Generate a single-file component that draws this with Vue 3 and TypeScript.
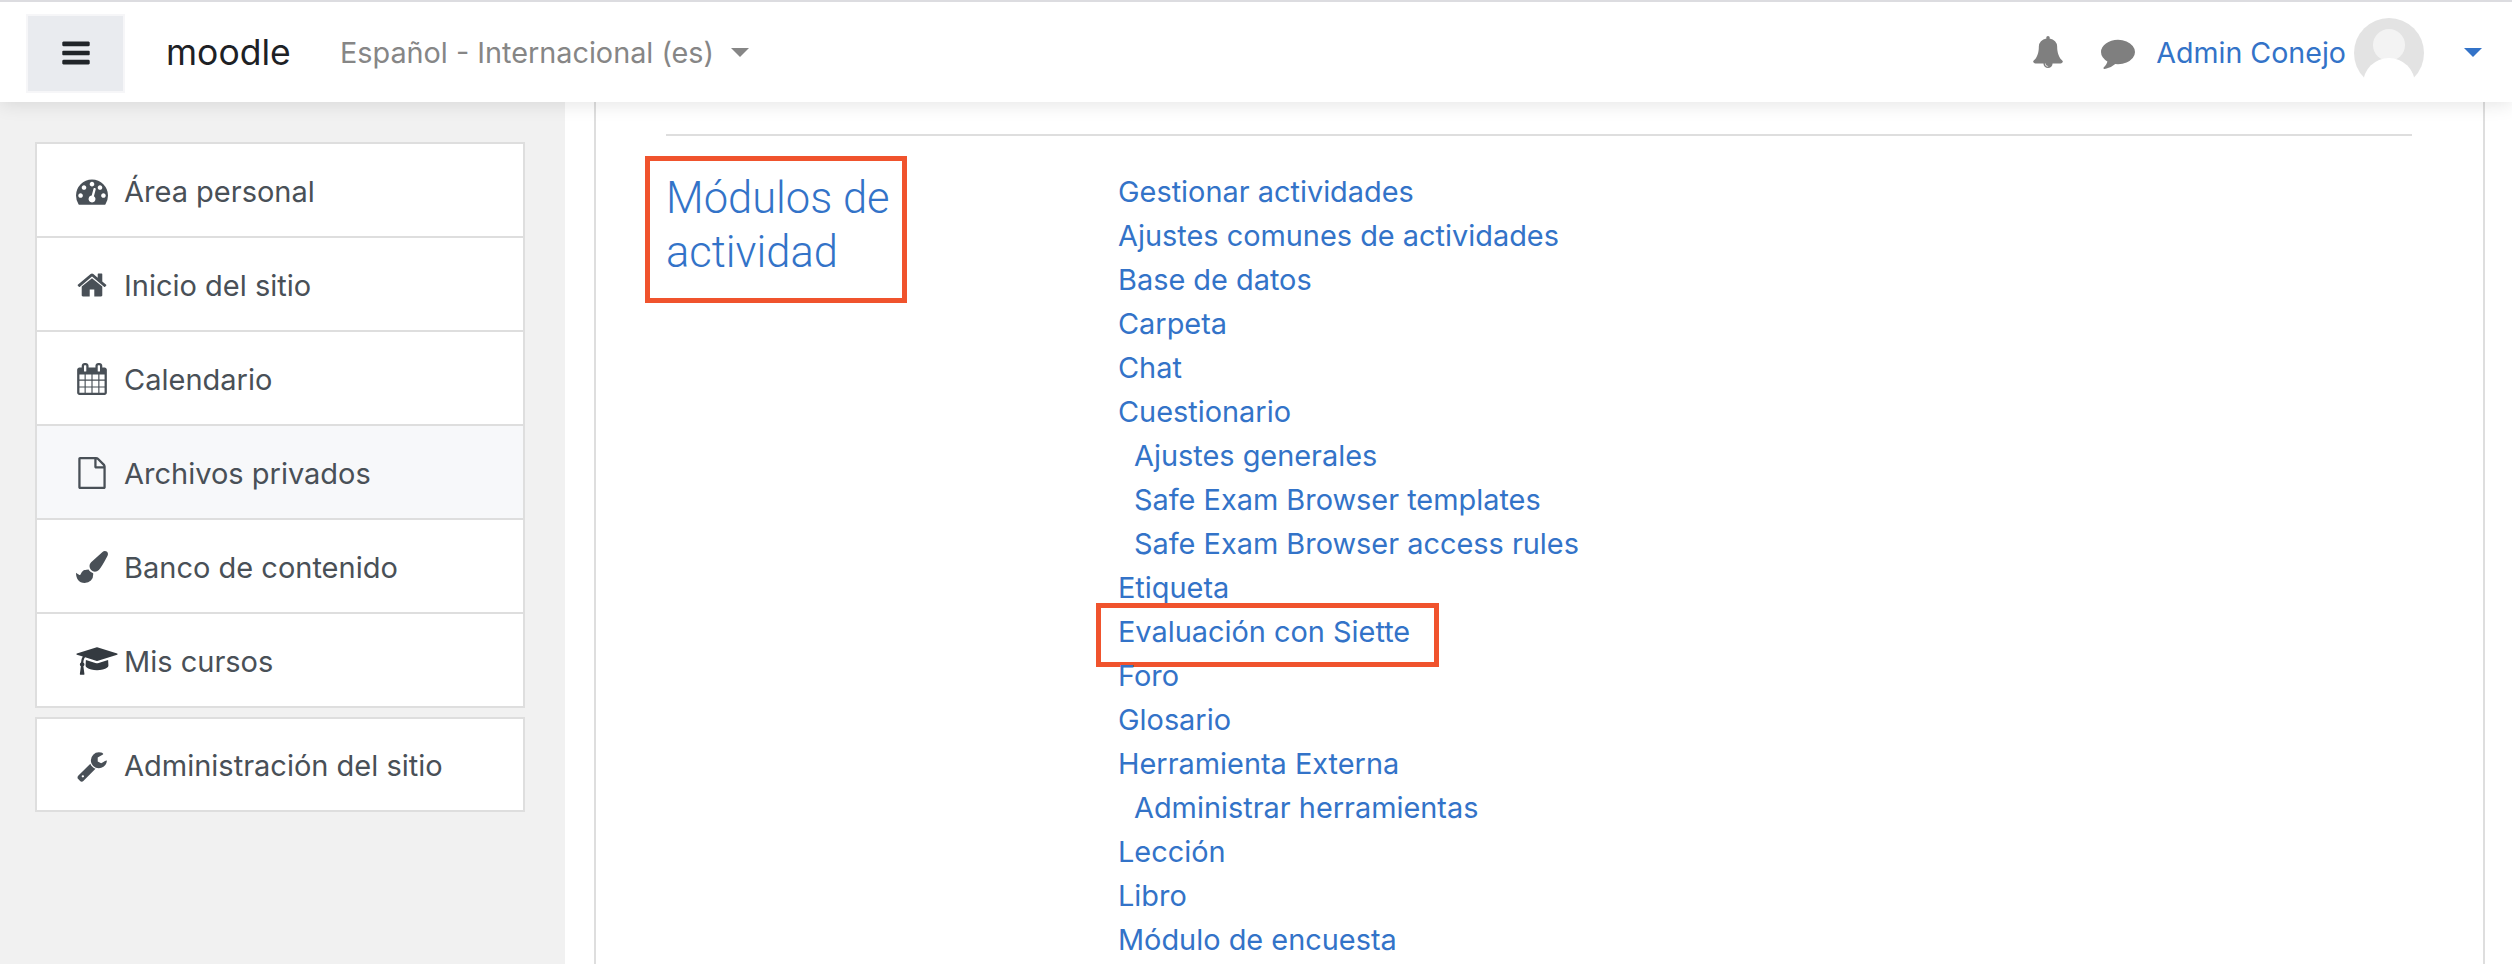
<script setup lang="ts">
interface NavItem { label: string; icon: string; vb: string; active?: boolean }
const P = {
  dash: 'M384 1152q0-53-37.5-90.5t-90.5-37.5-90.5 37.5-37.5 90.5 37.5 90.5 90.5 37.5 90.5-37.5 37.5-90.5zm192-448q0-53-37.5-90.5t-90.5-37.5-90.5 37.5-37.5 90.5 37.5 90.5 90.5 37.5 90.5-37.5 37.5-90.5zm428 481l101-382q6-26-7.5-48.5t-38.5-29.5-48 6.5-30 39.5l-101 382q-60 5-107 43.5t-63 98.5q-20 77 20 146t117 89 146-20 89-117q16-60-6-117t-72-91zm660-33q0-53-37.5-90.5t-90.5-37.5-90.5 37.5-37.5 90.5 37.5 90.5 90.5 37.5 90.5-37.5 37.5-90.5zm-640-640q0-53-37.5-90.5t-90.5-37.5-90.5 37.5-37.5 90.5 37.5 90.5 90.5 37.5 90.5-37.5 37.5-90.5zm448 192q0-53-37.5-90.5t-90.5-37.5-90.5 37.5-37.5 90.5 37.5 90.5 90.5 37.5 90.5-37.5 37.5-90.5zm320 448q0 261-141 483-19 29-54 29h-1402q-35 0-54-29-141-221-141-483 0-182 71-348t191-286 286-191 348-71 348 71 286 191 191 286 71 348z',
  home: 'M1472 992v480q0 26-19 45t-45 19h-384v-384h-256v384h-384q-26 0-45-19t-19-45v-480q0-1 .5-3t.5-3l575-474 575 474q1 2 1 6zm223-69l-62 74q-8 9-21 11h-3q-13 0-21-7l-692-577-692 577q-12 8-24 7-13-2-21-11l-62-74q-8-10-7-23.5t11-21.5l719-599q32-26 76-26t76 26l244 204v-195q0-14 9-23t23-9h192q14 0 23 9t9 23v408l219 182q10 8 11 21.5t-7 23.5z',
  cal: 'M192 1664h288v-288h-288v288zm352 0h320v-288h-320v288zm-352-352h288v-320h-288v320zm352 0h320v-320h-320v320zm-352-384h288v-288h-288v288zm736 736h320v-288h-320v288zm-384-736h320v-288h-320v288zm768 736h288v-288h-288v288zm-384-352h320v-320h-320v320zm-352-864v-288q0-13-9.5-22.5t-22.5-9.5h-64q-13 0-22.5 9.5t-9.5 22.5v288q0 13 9.5 22.5t22.5 9.5h64q13 0 22.5-9.5t9.5-22.5zm736 864h288v-320h-288v320zm-384-384h320v-288h-320v288zm384 0h288v-288h-288v288zm32-480v-288q0-13-9.5-22.5t-22.5-9.5h-64q-13 0-22.5 9.5t-9.5 22.5v288q0 13 9.5 22.5t22.5 9.5h64q13 0 22.5-9.5t9.5-22.5zm384-64v1280q0 52-38 90t-90 38h-1408q-52 0-90-38t-38-90v-1280q0-52 38-90t90-38h128v-96q0-66 47-113t113-47h64q66 0 113 47t47 113v96h384v-96q0-66 47-113t113-47h64q66 0 113 47t47 113v96h128q52 0 90 38t38 90z',
  file: 'M1596 380q28 28 48 76t20 88v1152q0 40-28 68t-68 28h-1344q-40 0-68-28t-28-68v-1600q0-40 28-68t68-28h896q40 0 88 20t76 48zm-444-244v376h376q-10-29-22-41l-313-313q-12-12-41-22zm384 1528v-1024h-416q-40 0-68-28t-28-68v-416h-768v1536h1280z',
  brush: 'M1615 0q70 0 122.5 46.5t52.5 116.5q0 63-45 151-332 629-465 752-97 91-218 91-126 0-216.5-92.5t-90.5-219.5q0-128 92-212l638-579q59-54 130-54zm-909 1034q39 76 106.5 130t150.5 76l1 71q4 213-129.5 347t-348.5 134q-123 0-218-46.5t-152.5-127.5-86.5-183-29-220q7 5 41 30t62 44.5 59 36.5 46 17q41 0 55-37 25-66 57.5-112.5t69.5-76 88-47.5 103-25.5 125-10.5z',
  cap: 'M1774 836l18 316q4 69-82 128t-235 93.5-323 34.5-323-34.5-235-93.5-82-128l18-316 574 181q22 7 48 7t48-7zm530-324q0 23-22 31l-1120 352q-4 1-10 1t-10-1l-652-206q-43 34-71 111.5t-34 178.5q63 36 63 109 0 69-58 107l58 433q2 14-8 25-9 11-24 11h-192q-15 0-24-11-10-11-8-25l58-433q-58-38-58-107 0-73 65-111 11-207 98-330l-333-104q-22-8-22-31t22-31l1120-352q4-1 10-1t10 1l1120 352q22 8 22 31z',
  wrench: 'M448 1472q0-26-19-45t-45-19-45 19-19 45 19 45 45 19 45-19 19-45zm644-420l-682 682q-37 37-90 37-52 0-91-37l-106-108q-38-36-38-90 0-53 38-91l681-681q39 98 114.5 173.5t173.5 114.5zm634-435q0 39-23 106-47 134-164.5 217.5t-258.5 83.5q-185 0-316.5-131.5t-131.5-316.5 131.5-316.5 316.5-131.5q58 0 121.5 16.5t107.5 46.5q16 11 16 28t-16 28l-293 169v224l193 107q5-3 79-48.5t135.5-81 70.5-35.5q15 0 23.5 10t8.5 25z',
  bars: 'M1664 1344v128q0 26-19 45t-45 19h-1408q-26 0-45-19t-19-45v-128q0-26 19-45t45-19h1408q26 0 45 19t19 45zm0-512v128q0 26-19 45t-45 19h-1408q-26 0-45-19t-19-45v-128q0-26 19-45t45-19h1408q26 0 45 19t19 45zm0-512v128q0 26-19 45t-45 19h-1408q-26 0-45-19t-19-45v-128q0-26 19-45t45-19h1408q26 0 45 19t19 45z',
  bell: 'M912 1696q0-16-16-16-59 0-101.5-42.5t-42.5-101.5q0-16-16-16t-16 16q0 73 51.5 124.5t124.5 51.5q16 0 16-16zm816-288q0 52-38 90t-90 38h-448q0 106-75 181t-181 75-181-75-75-181h-448q-52 0-90-38t-38-90q50-42 91-88t85-119.5 74.5-158.5 50-206 19.5-260q0-152 117-282.5t307-158.5q-8-19-8-39 0-40 28-68t68-28 68 28 28 68q0 20-8 39 190 28 307 158.5t117 282.5q0 139 19.5 260t50 206 74.5 158.5 85 119.5 91 88z',
  comment: 'M1792 896q0 174-120 321.5t-326 233-450 85.5q-70 0-145-8-198 175-460 242-49 14-114 22-17 2-30.5-9t-17.5-29v-1q-3-4-.5-12t2-10 4.5-9.5l6-9 7-8.5 8-9q7-8 31-34.5t34.5-38 31-39.5 32.5-51 27-59 26-76q-157-89-247.5-220t-90.5-281q0-130 71-248.5t191-204.5 286-136.5 348-50.5q244 0 450 85.5t326 233 120 321.5z',
}
const mainNav: NavItem[] = [
  { label: 'Área personal', icon: P.dash, vb: '0 0 1792 1792' },
  { label: 'Inicio del sitio', icon: P.home, vb: '0 0 1792 1792' },
  { label: 'Calendario', icon: P.cal, vb: '0 0 1792 1792' },
  { label: 'Archivos privados', icon: P.file, vb: '0 0 1792 1792', active: true },
  { label: 'Banco de contenido', icon: P.brush, vb: '0 0 1792 1792' },
  { label: 'Mis cursos', icon: P.cap, vb: '0 0 2304 1792' },
]
const adminNav: NavItem[] = [{ label: 'Administración del sitio', icon: P.wrench, vb: '0 0 1792 1792' }]
const links: { t: string; sub?: boolean; mark?: boolean }[] = [
  { t: 'Gestionar actividades' },
  { t: 'Ajustes comunes de actividades' },
  { t: 'Base de datos' },
  { t: 'Carpeta' },
  { t: 'Chat' },
  { t: 'Cuestionario' },
  { t: 'Ajustes generales', sub: true },
  { t: 'Safe Exam Browser templates', sub: true },
  { t: 'Safe Exam Browser access rules', sub: true },
  { t: 'Etiqueta' },
  { t: 'Evaluación con Siette', mark: true },
  { t: 'Foro' },
  { t: 'Glosario' },
  { t: 'Herramienta Externa' },
  { t: 'Administrar herramientas', sub: true },
  { t: 'Lección' },
  { t: 'Libro' },
  { t: 'Módulo de encuesta' },
]
</script>

<template>
  <div class="page">
    <header class="navbar">
      <button class="burger" type="button" aria-label="Menú">
        <svg class="burger-icon" viewBox="0 0 1792 1792"><path :d="P.bars" /></svg>
      </button>
      <span class="brand">moodle</span>
      <span class="lang">Español - Internacional (es)</span>
      <span class="caret gray"></span>
      <div class="spacer"></div>
      <svg class="bell" viewBox="0 0 1792 1792"><path :d="P.bell" /></svg>
      <svg class="chat" viewBox="0 0 1792 1792"><path :d="P.comment" /></svg>
      <span class="user">Admin Conejo</span>
      <svg class="avatar" viewBox="0 0 70 70">
        <circle cx="35" cy="35" r="35" fill="#e3e3e3" />
        <circle cx="35" cy="27" r="16" fill="#f3f3f3" />
        <circle cx="35" cy="66" r="26" fill="#fff" />
      </svg>
      <span class="caret blue"></span>
    </header>
    <div class="body">
      <aside class="sidebar">
        <nav class="card">
          <a v-for="n in mainNav" :key="n.label" class="nav-row" :class="{ active: n.active }">
            <span class="nav-icon"><svg :viewBox="n.vb" :class="{ wide: n.vb.startsWith('0 0 2304') }"><path :d="n.icon" /></svg></span>
            <span>{{ n.label }}</span>
          </a>
        </nav>
        <nav class="card solo">
          <a v-for="n in adminNav" :key="n.label" class="nav-row">
            <span class="nav-icon"><svg :viewBox="n.vb"><path :d="n.icon" /></svg></span>
            <span>{{ n.label }}</span>
          </a>
        </nav>
      </aside>
      <main class="main">
        <div class="panel">
          <hr class="rule" />
          <section class="settings">
            <h2 class="heading">
              <span class="heading-text">Módulos de actividad</span>
              <span class="mark mark-heading"></span>
            </h2>
            <ul class="links">
              <li v-for="l in links" :key="l.t" :class="{ sub: l.sub }">
                <a>{{ l.t }}</a>
                <span v-if="l.mark" class="mark mark-link"></span>
              </li>
            </ul>
          </section>
        </div>
      </main>
    </div>
  </div>
</template>

<style>
html, body { margin: 0; padding: 0; background: #fff; overflow: hidden; }
</style>

<style scoped>
.page {
  width: 2512px;
  height: 964px;
  overflow: hidden;
  display: flex;
  flex-direction: column;
  font-family: Inter, "Liberation Sans", sans-serif;
  font-size: 29px;
  color: #495057;
}
.navbar {
  position: relative;
  z-index: 2;
  box-sizing: border-box;
  flex: none;
  height: 102px;
  border-top: 2px solid #dcdce0;
  background: #fff;
  box-shadow: 0 2px 18px rgba(0, 0, 0, 0.11);
  display: flex;
  align-items: center;
  padding-left: 26px;
}
.burger {
  box-sizing: border-box;
  width: 99px;
  height: 79px;
  margin-top: 2px;
  background: #e9ebef;
  border: 2px solid #f6f6f8;
  padding: 0;
  display: flex;
  align-items: center;
  justify-content: center;
}
.burger-icon { width: 32px; height: 32px; fill: #212529; }
.brand { margin-left: 41px; font-size: 35.5px; color: #1d2125; width: 174px; }
.lang { color: #868686; font-size: 28.8px; }
.caret { width: 0; height: 0; border-left: 9px solid transparent; border-right: 9px solid transparent; border-top: 9px solid #868686; }
.caret.gray { margin-left: 17px; }
.caret.blue { border-top-color: #3373c8; margin-left: 40px; margin-right: 30px; }
.spacer { flex: 1; }
.bell { width: 32px; height: 32px; fill: #7f7f7f; }
.chat { width: 34px; height: 34px; fill: #7f7f7f; margin-left: 37px; }
.user { margin-left: 21px; color: #3373c8; font-size: 28.6px; }
.avatar { width: 70px; height: 70px; margin-left: 8px; margin-top: 2px; }
.body { flex: 1; display: flex; min-height: 0; }
.sidebar {
  box-sizing: border-box;
  width: 565px;
  flex: none;
  background: #f1f1f1;
  padding: 40px 40px 0 35px;
  display: flex;
  flex-direction: column;
  gap: 9px;
}
.card { background: #fff; border: 2px solid #dedede; }
.nav-row {
  box-sizing: border-box;
  height: 94px;
  display: flex;
  align-items: center;
  padding: 2px 0 0 39px;
  color: #495057;
  border-top: 2px solid #dedede;
}
.nav-row:first-child { border-top: 0; height: 92px; }
.solo .nav-row:first-child { height: 91px; }
.nav-row.active { background: #f7f8fa; }
.nav-icon { width: 48px; flex: none; display: flex; align-items: center; }
.nav-icon svg { width: 32px; height: 32px; fill: #495057; }
.nav-icon svg.wide { width: 42px; fill: #343a40; }
.main { flex: 1; min-width: 0; padding: 0 27px 0 29px; background: #fff; }
.panel {
  box-sizing: border-box;
  height: 100%;
  border-left: 2px solid #dedede;
  border-right: 2px solid #dedede;
  padding: 32px 71px 0 70px;
}
.rule { margin: 0; border: 0; border-top: 2px solid #dedede; }
.settings { display: flex; margin-top: 34px; }
.heading {
  position: relative;
  box-sizing: border-box;
  flex: none;
  width: 452px;
  margin: 0;
  padding: 2px 190px 0 0;
  font-family: Roboto, Inter, sans-serif;
  font-size: 43.5px;
  font-weight: 300;
  line-height: 54px;
  color: #3373c8;
  height: 120px;
}
.links { list-style: none; margin: 0; padding: 0; }
.links li { position: relative; height: 44px; line-height: 44px; color: #3373c8; font-size: 28.9px; white-space: nowrap; }
.links li.sub { padding-left: 16px; }
.mark {
  position: absolute;
  box-sizing: border-box;
  border: 5px solid #f0532d;
  pointer-events: none;
}
.mark-heading { left: -21px; top: -14px; width: 262px; height: 147px; }
.mark-link { left: -22px; top: -7px; width: 343px; height: 64px; }
</style>
